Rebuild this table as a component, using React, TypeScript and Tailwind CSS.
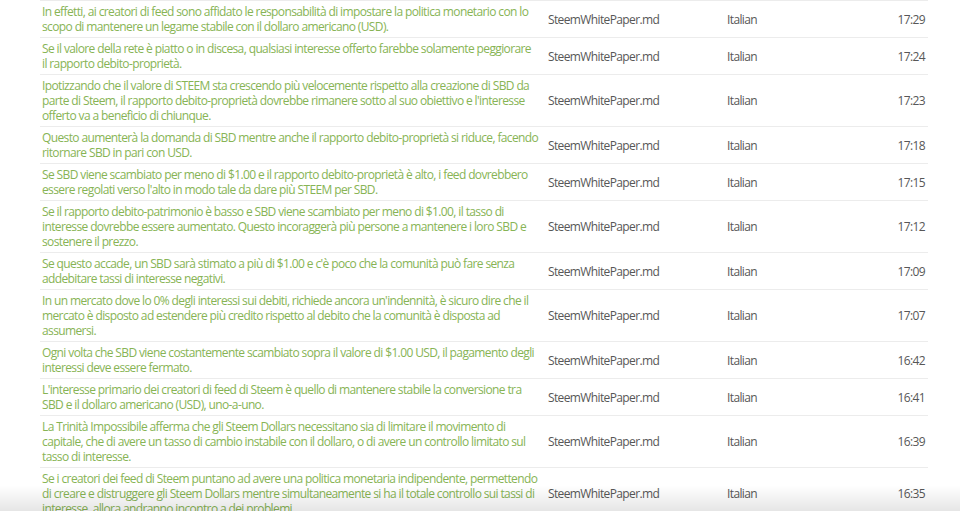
const rows = [
  {
    text: "In effetti, ai creatori di feed sono affidato le responsabilità di impostare la politica monetario con lo scopo di mantenere un legame stabile con il dollaro americano (USD).",
    time: "17:29",
  },
  {
    text: "Se il valore della rete è piatto o in discesa, qualsiasi interesse offerto farebbe solamente peggiorare\nil rapporto debito-proprietà.",
    time: "17:24",
  },
  {
    text: "Ipotizzando che il valore di STEEM sta crescendo più velocemente rispetto alla creazione di SBD da parte di Steem, il rapporto debito-proprietà dovrebbe rimanere sotto al suo obiettivo e l'interesse offerto va a beneficio di chiunque.",
    time: "17:23",
  },
  {
    text: "Questo aumenterà la domanda di SBD mentre anche il rapporto debito-proprietà si riduce, facendo ritornare SBD in pari con USD.",
    time: "17:18",
  },
  {
    text: "Se SBD viene scambiato per meno di $1.00 e il rapporto debito-proprietà è alto, i feed dovrebbero essere regolati verso l'alto in modo tale da dare più STEEM per SBD.",
    time: "17:15",
  },
  {
    text: "Se il rapporto debito-patrimonio è basso e SBD viene scambiato per meno di $1.00, il tasso di interesse dovrebbe essere aumentato. Questo incoraggerà più persone a mantenere i loro SBD e sostenere il prezzo.",
    time: "17:12",
  },
  {
    text: "Se questo accade, un SBD sarà stimato a più di $1.00 e c'è poco che la comunità può fare senza addebitare tassi di interesse negativi.",
    time: "17:09",
  },
  {
    text: "In un mercato dove lo 0% degli interessi sui debiti, richiede ancora un'indennità, è sicuro dire che il mercato è disposto ad estendere più credito rispetto al debito che la comunità è disposta ad assumersi.",
    time: "17:07",
  },
  {
    text: "Ogni volta che SBD viene costantemente scambiato sopra il valore di $1.00 USD, il pagamento degli interessi deve essere fermato.",
    time: "16:42",
  },
  {
    text: "L'interesse primario dei creatori di feed di Steem è quello di mantenere stabile la conversione tra SBD e il dollaro americano (USD), uno-a-uno.",
    time: "16:41",
  },
  {
    text: "La Trinità Impossibile afferma che gli Steem Dollars necessitano sia di limitare il movimento di capitale, che di avere un tasso di cambio instabile con il dollaro, o di avere un controllo limitato sul tasso di interesse.",
    time: "16:39",
  },
  {
    text: "Se i creatori dei feed di Steem puntano ad avere una politica monetaria indipendente, permettendo di creare e distruggere gli Steem Dollars mentre simultaneamente si ha il totale controllo sui tassi di interesse, allora andranno incontro a dei problemi.",
    time: "16:35",
  },
];

export default function App() {
  return (
    <div className="relative h-[511px] w-[960px] overflow-hidden bg-white font-['Open_Sans',sans-serif] text-[12px] leading-[15px] tracking-[-0.62px]">
      <div className="ml-[40px] w-[888px]">
        {rows.map((r, i) => (
          <div
            key={i}
            className="grid grid-cols-[506px_179px_1fr_60px] items-center border-t border-[#ececec] py-[3px]"
          >
            <div className="whitespace-pre-line pl-[2px] pr-[3px] text-[#87b455]">{r.text}</div>
            <div className="pl-[2px] text-[#575757]">SteemWhitePaper.md</div>
            <div className="pl-[2px] text-[#575757]">Italian</div>
            <div className="pr-[3px] text-right text-[#575757]">{r.time}</div>
          </div>
        ))}
      </div>
      <div className="pointer-events-none absolute inset-x-0 bottom-0 h-[26px] bg-gradient-to-b from-transparent to-black/10" />
    </div>
  );
}
